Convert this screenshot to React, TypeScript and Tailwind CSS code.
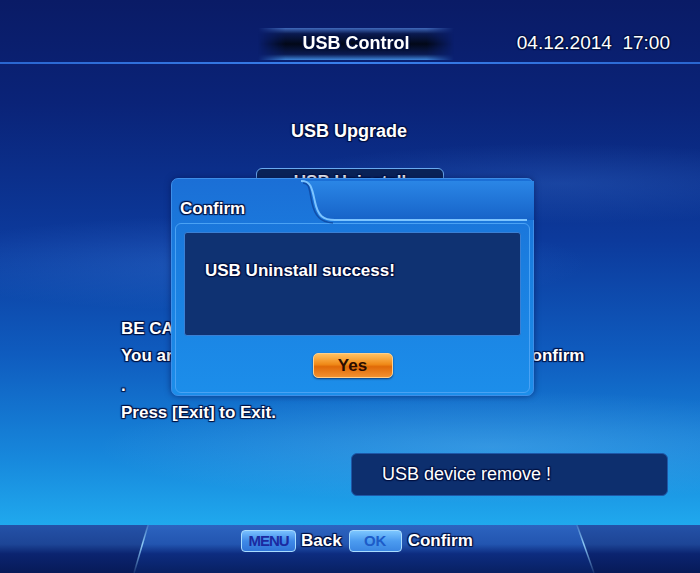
const shadow = '[text-shadow:1px_1px_1px_#001040,-1px_-1px_1px_#001040,1px_-1px_1px_#001040,-1px_1px_1px_#001040]'

function HeaderTab() {
  return (
    <div className="relative h-[42px]">
      {/* recessed right part with curved edge */}
      <svg className="absolute left-[128px] top-0" width="233" height="44" viewBox="0 0 233 44">
        <defs>
          <linearGradient id="tabfill" x1="0" y1="0" x2="0" y2="1">
            <stop offset="0" stopColor="#2a86e6" />
            <stop offset="1" stopColor="#1763c8" />
          </linearGradient>
        </defs>
        <path d="M0 1 C10 1 11 8 14 22 C17 36 22 40 34 40 L233 40 L233 1 Z" fill="url(#tabfill)" />
        <path d="M0 1 C10 1 11 8 14 22 C17 36 22 40 34 40 L226 40" fill="none" stroke="#7cc4ff" strokeWidth="2" />
        <path d="M2 3 C9 3 8 10 11 23 C14 36 19 42 32 43" fill="none" stroke="#0b3f95" strokeWidth="1.5" opacity="0.7" />
      </svg>
      <div className={`relative pl-[7px] pt-[20px] text-[17px] font-bold leading-none text-white ${shadow}`}>Confirm</div>
    </div>
  )
}

function Dialog() {
  return (
    <div className="absolute left-[171px] top-[178px] h-[218px] w-[363px] rounded-[7px] border border-[#3d8ee8] bg-[linear-gradient(180deg,#1b6fd6_0%,#1a7ee0_40%,#1c8eea_100%)] p-[1px] shadow-[0_0_6px_rgba(0,20,80,0.6)]">
      <HeaderTab />
      <div className="mx-[2px] mt-[1px] h-[170px] rounded-[6px] border border-[#4aa2f4] px-[8px] pt-[8px]">
        <div className="h-[104px] rounded-[3px] border border-[#3a7fd4] bg-[#0f3272] pl-[20px] pt-[29px]">
          <div className={`text-[17px] font-bold leading-none text-white ${shadow}`}>USB Uninstall success!</div>
        </div>
        <div className="flex justify-center pt-[17px]">
          <div className="flex h-[25px] w-[80px] items-center justify-center rounded-[5px] border border-[#ffcf8a] bg-[linear-gradient(180deg,#ffc060_0%,#f08a18_45%,#e06a08_55%,#f29030_100%)] text-[17px] font-bold text-[#2a0c00] shadow-[0_1px_2px_rgba(0,0,40,0.6)]">
            Yes
          </div>
        </div>
      </div>
    </div>
  )
}

function Badge({ label, tone }: { label: string; tone: 'menu' | 'ok' }) {
  return (
    <div
      className={
        tone === 'menu'
          ? 'flex h-[22px] w-[55px] items-center justify-center rounded-[4px] border border-[#a8dcff] bg-[linear-gradient(180deg,#78c0ff_0%,#3f8ae8_50%,#2f74d8_100%)] text-[15px] font-bold tracking-[-1px] text-[#1b2aa0]'
          : 'flex h-[22px] w-[53px] items-center justify-center rounded-[4px] border border-[#a8dcff] bg-[linear-gradient(180deg,#7cc6ff_0%,#4c9cf0_50%,#3a86e2_100%)] text-[15px] font-bold text-[#1d5cc8]'
      }
    >
      {label}
    </div>
  )
}

export default function App() {
  return (
    <div className="relative h-[573px] w-[700px] overflow-hidden bg-[linear-gradient(180deg,#0a1b66_0%,#0a2378_18%,#0c3a9c_42%,#0f5cbf_62%,#1788dc_80%,#20aaee_92%,#22b0f0_100%)] font-['Liberation_Sans',Arial,sans-serif]">
      {/* background swooshes */}
      <div className="pointer-events-none absolute inset-0 bg-[radial-gradient(ellipse_70%_12%_at_35%_46%,rgba(90,160,255,0.22),transparent_70%),radial-gradient(ellipse_60%_10%_at_80%_32%,rgba(90,160,255,0.18),transparent_70%),radial-gradient(ellipse_80%_14%_at_70%_78%,rgba(140,210,255,0.25),transparent_70%)]" />

      <div className="relative flex h-full flex-col">
        {/* header */}
        <div className="flex h-[62px] items-center pt-[25px]">
          <div className="ml-[258px] flex h-[32px] w-[196px] items-center justify-center bg-[linear-gradient(180deg,rgba(110,170,255,0.55)_0%,#0a1a50_18%,#020818_50%,#0a1a50_82%,rgba(80,170,255,0.75)_100%)] [mask-image:linear-gradient(90deg,transparent,black_14%,black_86%,transparent)]">
            <span className={`text-[18px] font-bold text-white ${shadow}`}>USB Control</span>
          </div>
          <div className={`ml-auto mr-[30px] text-[19px] text-white ${shadow}`}>04.12.2014&nbsp; 17:00</div>
        </div>
        <div className="h-[2px] bg-[linear-gradient(90deg,#2a66d0,#3a80ec_50%,#2a66d0)]" />

        {/* content */}
        <div className={`mt-[58px] pl-[291px] text-[18px] font-bold leading-none text-white ${shadow}`}>USB Upgrade</div>

        <div className="ml-[256px] mt-[28px] flex h-[20px] w-[188px] justify-center rounded-[6px] border border-[#6aaaf0] bg-[#0a2358] pt-[4px]">
          <span className={`text-[17px] font-bold leading-none text-white ${shadow}`}>USB Uninstall</span>
        </div>

        <div className={`mt-[127px] pl-[121px] text-[17px] font-bold leading-[27px] text-white ${shadow}`}>
          <div>BE CAREFUL!</div>
          <div className="whitespace-nowrap">You are about to uninstall the USB. Press [OK] to confirm</div>
          <div className="mt-[3px]">.</div>
          <div>Press [Exit] to Exit.</div>
        </div>

        <div className="ml-[351px] mt-[27px] flex h-[43px] w-[317px] items-center rounded-[6px] border border-[#1e58a8] bg-[#0d2f6e] pl-[30px]">
          <span className={`text-[18px] text-white ${shadow}`}>USB device remove !</span>
        </div>

        {/* bottom bar */}
        <div className="relative mt-auto h-[48px] bg-[linear-gradient(180deg,#2552a8_0%,#1d4596_40%,#0b2470_60%,#071a58_100%)]">
          <div className="absolute inset-0 bg-[linear-gradient(180deg,#2d64c0_0%,#2255b0_40%,#0d2c80_60%,#082062_100%)] [clip-path:polygon(148px_0,577px_0,594px_48px,134px_48px)]" />
          <svg className="absolute inset-0" width="700" height="48" viewBox="0 0 700 48">
            <defs>
              <linearGradient id="edge" x1="0" y1="0" x2="0" y2="1">
                <stop offset="0" stopColor="#9ad8ff" stopOpacity="0.2" />
                <stop offset="0.4" stopColor="#9ad8ff" stopOpacity="0.9" />
                <stop offset="1" stopColor="#9ad8ff" stopOpacity="0.1" />
              </linearGradient>
            </defs>
            <path d="M148 0 L134 48" stroke="url(#edge)" strokeWidth="1.5" />
            <path d="M577 0 L594 48" stroke="url(#edge)" strokeWidth="1.5" />
          </svg>
          <div className="relative flex items-center pl-[241px] pt-[3px] text-[17px] font-bold text-white">
            <Badge label="MENU" tone="menu" />
            <span className={`ml-[5px] ${shadow}`}>Back</span>
            <div className="ml-[7px]">
              <Badge label="OK" tone="ok" />
            </div>
            <span className={`ml-[6px] ${shadow}`}>Confirm</span>
          </div>
        </div>
      </div>

      <Dialog />
    </div>
  )
}
